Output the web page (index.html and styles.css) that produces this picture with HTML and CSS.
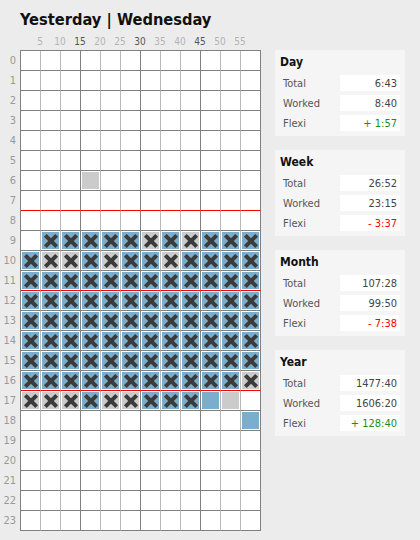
FILE: index.html
```html
<!DOCTYPE html>
<html>
<head>
<meta charset="utf-8">
<link rel="stylesheet" href="styles.css">
</head>
<body>
<h1 class="title">Yesterday | Wednesday</h1>
<div class="main">
  <div class="left">
    <div class="mins">
      <span>5</span><span>10</span><span class="major">15</span><span>20</span><span>25</span><span class="major">30</span><span>35</span><span>40</span><span class="major">45</span><span>50</span><span>55</span>
    </div>
    <div class="chart">
      <div class="hours">
        <span>0</span><span>1</span><span>2</span><span>3</span><span>4</span><span>5</span><span>6</span><span>7</span><span>8</span><span>9</span><span>10</span><span>11</span><span>12</span><span>13</span><span>14</span><span>15</span><span>16</span><span>17</span><span>18</span><span>19</span><span>20</span><span>21</span><span>22</span><span>23</span>
      </div>
      <div class="grid">
        <div class="r"><i></i><i></i><i></i><i></i><i></i><i></i><i></i><i></i><i></i><i></i><i></i><i></i></div>
        <div class="r"><i></i><i></i><i></i><i></i><i></i><i></i><i></i><i></i><i></i><i></i><i></i><i></i></div>
        <div class="r"><i></i><i></i><i></i><i></i><i></i><i></i><i></i><i></i><i></i><i></i><i></i><i></i></div>
        <div class="r"><i></i><i></i><i></i><i></i><i></i><i></i><i></i><i></i><i></i><i></i><i></i><i></i></div>
        <div class="r"><i></i><i></i><i></i><i></i><i></i><i></i><i></i><i></i><i></i><i></i><i></i><i></i></div>
        <div class="r"><i></i><i></i><i></i><i></i><i></i><i></i><i></i><i></i><i></i><i></i><i></i><i></i></div>
        <div class="r"><i></i><i></i><i></i><i class="g"></i><i></i><i></i><i></i><i></i><i></i><i></i><i></i><i></i></div>
        <div class="r red"><i></i><i></i><i></i><i></i><i></i><i></i><i></i><i></i><i></i><i></i><i></i><i></i></div>
        <div class="r"><i></i><i></i><i></i><i></i><i></i><i></i><i></i><i></i><i></i><i></i><i></i><i></i></div>
        <div class="r"><i></i><i class="b x"></i><i class="b x"></i><i class="b x"></i><i class="b x"></i><i class="b x"></i><i class="g x"></i><i class="b x"></i><i class="g x"></i><i class="b x"></i><i class="b x"></i><i class="b x"></i></div>
        <div class="r"><i class="b x"></i><i class="g x"></i><i class="g x"></i><i class="b x"></i><i class="g x"></i><i class="b x"></i><i class="b x"></i><i class="g x"></i><i class="b x"></i><i class="b x"></i><i class="b x"></i><i class="b x"></i></div>
        <div class="r red"><i class="b x"></i><i class="b x"></i><i class="b x"></i><i class="b x"></i><i class="b x"></i><i class="b x"></i><i class="b x"></i><i class="b x"></i><i class="b x"></i><i class="b x"></i><i class="b x"></i><i class="b x"></i></div>
        <div class="r"><i class="b x"></i><i class="b x"></i><i class="b x"></i><i class="b x"></i><i class="b x"></i><i class="b x"></i><i class="b x"></i><i class="b x"></i><i class="b x"></i><i class="b x"></i><i class="b x"></i><i class="b x"></i></div>
        <div class="r"><i class="b x"></i><i class="b x"></i><i class="b x"></i><i class="b x"></i><i class="b x"></i><i class="b x"></i><i class="b x"></i><i class="b x"></i><i class="b x"></i><i class="b x"></i><i class="b x"></i><i class="b x"></i></div>
        <div class="r"><i class="b x"></i><i class="b x"></i><i class="b x"></i><i class="b x"></i><i class="b x"></i><i class="b x"></i><i class="b x"></i><i class="b x"></i><i class="b x"></i><i class="b x"></i><i class="b x"></i><i class="b x"></i></div>
        <div class="r"><i class="b x"></i><i class="b x"></i><i class="b x"></i><i class="b x"></i><i class="b x"></i><i class="b x"></i><i class="b x"></i><i class="b x"></i><i class="b x"></i><i class="b x"></i><i class="b x"></i><i class="b x"></i></div>
        <div class="r red"><i class="b x"></i><i class="b x"></i><i class="b x"></i><i class="b x"></i><i class="b x"></i><i class="b x"></i><i class="b x"></i><i class="b x"></i><i class="b x"></i><i class="b x"></i><i class="b x"></i><i class="g x"></i></div>
        <div class="r"><i class="g x"></i><i class="g x"></i><i class="g x"></i><i class="b x"></i><i class="g x"></i><i class="g x"></i><i class="b x"></i><i class="b x"></i><i class="b x"></i><i class="b"></i><i class="g"></i><i></i></div>
        <div class="r"><i></i><i></i><i></i><i></i><i></i><i></i><i></i><i></i><i></i><i></i><i></i><i class="b"></i></div>
        <div class="r"><i></i><i></i><i></i><i></i><i></i><i></i><i></i><i></i><i></i><i></i><i></i><i></i></div>
        <div class="r"><i></i><i></i><i></i><i></i><i></i><i></i><i></i><i></i><i></i><i></i><i></i><i></i></div>
        <div class="r"><i></i><i></i><i></i><i></i><i></i><i></i><i></i><i></i><i></i><i></i><i></i><i></i></div>
        <div class="r"><i></i><i></i><i></i><i></i><i></i><i></i><i></i><i></i><i></i><i></i><i></i><i></i></div>
        <div class="r"><i></i><i></i><i></i><i></i><i></i><i></i><i></i><i></i><i></i><i></i><i></i><i></i></div>
      </div>
    </div>
  </div>
  <div class="side">
    <section class="panel">
      <h2>Day</h2>
      <div class="kv"><span class="k">Total</span><span class="v">6:43</span></div>
      <div class="kv"><span class="k">Worked</span><span class="v">8:40</span></div>
      <div class="kv"><span class="k">Flexi</span><span class="v pos">+ 1:57</span></div>
    </section>
    <section class="panel">
      <h2>Week</h2>
      <div class="kv"><span class="k">Total</span><span class="v">26:52</span></div>
      <div class="kv"><span class="k">Worked</span><span class="v">23:15</span></div>
      <div class="kv"><span class="k">Flexi</span><span class="v neg">- 3:37</span></div>
    </section>
    <section class="panel">
      <h2>Month</h2>
      <div class="kv"><span class="k">Total</span><span class="v">107:28</span></div>
      <div class="kv"><span class="k">Worked</span><span class="v">99:50</span></div>
      <div class="kv"><span class="k">Flexi</span><span class="v neg">- 7:38</span></div>
    </section>
    <section class="panel">
      <h2>Year</h2>
      <div class="kv"><span class="k">Total</span><span class="v">1477:40</span></div>
      <div class="kv"><span class="k">Worked</span><span class="v">1606:20</span></div>
      <div class="kv"><span class="k">Flexi</span><span class="v pos">+ 128:40</span></div>
    </section>
  </div>
</div>
</body>
</html>
```

FILE: styles.css
```css
html, body {
  margin: 0;
  padding: 0;
  background: #ececec;
}
body {
  font-family: "DejaVu Sans Condensed", "DejaVu Sans", sans-serif;
  font-stretch: condensed;
  color: #111;
}
.title {
  margin: 0;
  padding: 10px 0 0 20px;
  font-size: 16.3px;
  line-height: 20px;
  font-weight: bold;
  color: #111;
}
.main {
  display: flex;
  align-items: flex-start;
}
.left {
  width: 261px;
  flex: none;
}
.mins {
  display: flex;
  height: 20px;
  padding-left: 30px;
  box-sizing: border-box;
  padding-top: 5px;
}
.mins span {
  width: 20px;
  text-align: center;
  font-size: 10px;
  line-height: 14px;
  color: #b3b3b3;
}
.mins span.major {
  color: #555;
}
.chart {
  display: flex;
  align-items: flex-start;
}
.hours {
  width: 20px;
  padding-top: 1px;
  display: flex;
  flex-direction: column;
}
.hours span {
  height: 20px;
  line-height: 20px;
  text-align: right;
  padding-right: 4px;
  font-size: 11px;
  color: #999;
}
.grid {
  border-top: 1px solid #808080;
  border-left: 1px solid #808080;
  background: #fff;
}
.r {
  display: flex;
}
.r i {
  display: block;
  width: 20px;
  height: 20px;
  box-sizing: border-box;
  border-right: 1px solid #b9b9b9;
  border-bottom: 1px solid #808080;
  background: #fff;
  position: relative;
}
.r i:nth-child(3n) {
  border-right-color: #808080;
}
.r.red i {
  border-bottom-color: #ff0000;
}
.r i.b {
  background: #7badcc;
  box-shadow: inset 0 0 0 1px #fff;
}
.r i.g {
  background: #cbcbcb;
  box-shadow: inset 0 0 0 1px #fff;
}
.r i.x::before,
.r i.x::after {
  content: "";
  position: absolute;
  left: 1.5px;
  top: 7.5px;
  width: 16px;
  height: 4px;
  background: #3b3b3b;
  transform: rotate(45deg);
}
.r i.x::after {
  transform: rotate(-45deg);
}
.side {
  width: 130px;
  margin-left: 14px;
  margin-top: 20px;
  display: flex;
  flex-direction: column;
  gap: 14px;
}
.panel {
  background: #f5f5f5;
  padding: 0 5px 5px 5px;
}
.panel h2 {
  margin: 0;
  height: 25px;
  font-size: 12px;
  line-height: 25px;
  font-weight: bold;
  color: #111;
}
.kv {
  display: flex;
  justify-content: space-between;
  height: 16px;
  margin-bottom: 4px;
  font-size: 11px;
  line-height: 16px;
}
.kv:last-child {
  margin-bottom: 0;
}
.k {
  padding-left: 3px;
  padding-top: 1px;
  color: #555;
}
.v {
  width: 60px;
  box-sizing: border-box;
  background: #fff;
  text-align: right;
  padding-right: 3px;
  padding-top: 1px;
  color: #444;
}
.v.pos { color: #1e8c1e; }
.v.neg { color: #ff0000; }
```
